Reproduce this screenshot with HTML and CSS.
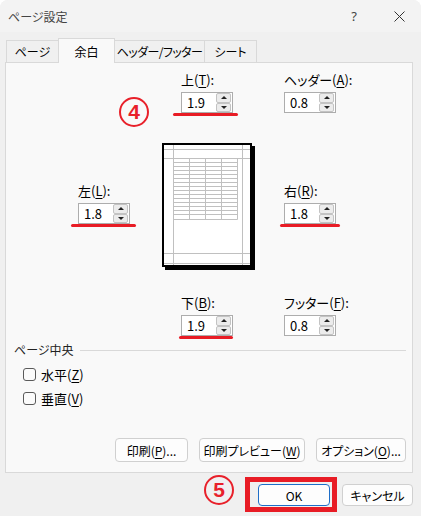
FILE: index.html
```html
<!DOCTYPE html>
<html lang="ja">
<head>
<meta charset="utf-8">
<title>ページ設定</title>
<link rel="stylesheet" href="styles.css">
</head>
<body>
<div class="window">
  <div class="titlebar">
    <span class="title">ページ設定</span>
    <span class="tb-help">?</span>
    <span class="tb-close"><svg width="11" height="11" viewBox="0 0 11 11"><path d="M0.5 0.5 L10.5 10.5 M10.5 0.5 L0.5 10.5" stroke="#333" stroke-width="1" fill="none"/></svg></span>
  </div>

  <div class="tabs">
    <div class="tab tab-page">ページ</div>
    <div class="tab tab-margin active">余白</div>
    <div class="tab tab-hf">ヘッダー/フッター</div>
    <div class="tab tab-sheet">シート</div>
  </div>

  <div class="panel">
    <div class="margins">
      <div class="field f-top">
        <label>上(<u>T</u>):</label>
        <div class="spin"><span class="val">1.9</span><span class="spin-btns"><span class="up"></span><span class="down"></span></span></div>
        <span class="redline rl-top"></span>
      </div>
      <div class="field f-header">
        <label>ヘッダー(<u>A</u>):</label>
        <div class="spin"><span class="val">0.8</span><span class="spin-btns"><span class="up"></span><span class="down"></span></span></div>
      </div>

      <div class="field f-left">
        <label>左(<u>L</u>):</label>
        <div class="spin"><span class="val">1.8</span><span class="spin-btns"><span class="up"></span><span class="down"></span></span></div>
        <span class="redline rl-left"></span>
      </div>
      <div class="preview">
        <svg width="93" height="127" viewBox="0 0 93 127">
          <rect x="3" y="3" width="90" height="124" fill="#000"/>
          <rect x="1" y="1" width="88" height="122" fill="#fff" stroke="#000" stroke-width="2"/>
          <g stroke="#c0c0c0" stroke-width="1" fill="none">
            <path d="M11.5 2 V122 M80.5 2 V122 M2 6.5 H88 M2 15.5 H88 M2 110.5 H88 M2 120.5 H88"/>
            <path d="M27.5 15.5 V76.5 M43.5 15.5 V76.5 M59.5 15.5 V76.5 M75.5 15.5 V76.5"/>
            <path d="M11.5 19.5 H75.5 M11.5 23.5 H75.5 M11.5 27.5 H75.5 M11.5 31.5 H75.5 M11.5 35.5 H75.5 M11.5 39.5 H75.5 M11.5 43.5 H75.5 M11.5 47.5 H75.5 M11.5 51.5 H75.5 M11.5 55.5 H75.5 M11.5 59.5 H75.5 M11.5 63.5 H75.5 M11.5 67.5 H75.5 M11.5 71.5 H75.5 M11.5 76.5 H75.5"/>
          </g>
        </svg>
      </div>
      <div class="field f-right">
        <label>右(<u>R</u>):</label>
        <div class="spin"><span class="val">1.8</span><span class="spin-btns"><span class="up"></span><span class="down"></span></span></div>
        <span class="redline rl-right"></span>
      </div>

      <div class="field f-bottom">
        <label>下(<u>B</u>):</label>
        <div class="spin"><span class="val">1.9</span><span class="spin-btns"><span class="up"></span><span class="down"></span></span></div>
        <span class="redline rl-bottom"></span>
      </div>
      <div class="field f-footer">
        <label>フッター(<u>F</u>):</label>
        <div class="spin"><span class="val">0.8</span><span class="spin-btns"><span class="up"></span><span class="down"></span></span></div>
      </div>
    </div>

    <div class="group">
      <div class="group-head"><span>ページ中央</span><span class="group-line"></span></div>
      <div class="check"><span class="box"></span>水平(<u>Z</u>)</div>
      <div class="check"><span class="box"></span>垂直(<u>V</u>)</div>
    </div>

    <div class="panel-buttons">
      <button class="btn b-print">印刷(<u>P</u>)...</button>
      <button class="btn b-preview">印刷プレビュー(<u>W</u>)</button>
      <button class="btn b-option">オプション(<u>O</u>)...</button>
    </div>
  </div>

  <div class="dialog-buttons">
    <button class="btn b-ok">OK</button>
    <button class="btn b-cancel">キャンセル</button>
  </div>

  <div class="badge badge-4">4</div>
  <div class="badge badge-5">5</div>
  <div class="ok-mark"></div>
</div>
</body>
</html>
```

FILE: styles.css
```css
* { box-sizing: border-box; }
html, body { margin: 0; padding: 0; }
body {
  width: 421px;
  height: 516px;
  overflow: hidden;
  background: #ffffff;
  font-family: "Noto Sans CJK JP", "Noto Sans", sans-serif;
  font-feature-settings: "palt";
  font-size: 12px;
  color: #000;
}
u { text-decoration: underline; text-underline-offset: 2px; }

.window {
  position: relative;
  width: 421px;
  height: 516px;
  background: #f0f0f0;
  border-radius: 8px 8px 0 0;
}

.titlebar {
  height: 32px;
  display: flex;
  align-items: center;
  padding: 0 12px 0 8px;
  background: #f3f3f3;
  border-radius: 8px 8px 0 0;
}
.title { flex: 1; color: #444; font-size: 12px; }
.tb-help { width: 20px; text-align: center; color: #444; font-size: 13px; margin-right: 25px; font-family: "Noto Sans", sans-serif; }
.tb-close { width: 20px; display: flex; justify-content: center; }

.tabs {
  display: flex;
  align-items: flex-end;
  height: 30px;
  padding: 6px 0 0 6px;
}
.tab {
  height: 22px;
  display: flex;
  align-items: center;
  justify-content: center;
  border: 1px solid #d9d9d9;
  border-bottom: none;
  margin-left: -1px;
  background: #f0f0f0;
  font-size: 12px;
  white-space: nowrap;
}
.tab:first-child { margin-left: 0; }
.tab.active {
  height: 25px;
  margin-bottom: -1px;
  background: #f9f9f9;
  position: relative;
  z-index: 1;
}
.tab-page { width: 53px; }
.tab-margin { width: 57px; }
.tab-hf { width: 91px; letter-spacing: -0.6px; }
.tab-sheet { width: 53px; }

.panel {
  margin: 0 8px 0 5px;
  height: 411px;
  border: 1px solid #d9d9d9;
  background: #f9f9f9;
  padding: 8px 6px 10px 8px;
  display: flex;
  flex-direction: column;
}

.margins {
  display: grid;
  grid-template-columns: 84px 122px auto;
  padding-left: 64px;
}
.f-top { grid-column: 2; grid-row: 1; margin-left: 19px; }
.f-header { grid-column: 3; grid-row: 1; }
.f-left { grid-column: 1; grid-row: 2; margin-top: 69px; }
.preview { grid-column: 2; grid-row: 2; margin-top: 30px; }
.preview svg { display: block; }
.f-right { grid-column: 3; grid-row: 2; margin-top: 69px; }
.f-bottom { grid-column: 2; grid-row: 3; margin-left: 19px; margin-top: 24px; }
.f-footer { grid-column: 3; grid-row: 3; margin-top: 24px; }

.field {
  position: relative;
  display: flex;
  flex-direction: column;
  align-items: flex-start;
  align-self: start;
}
.field label {
  font-size: 13px;
  line-height: 18px;
  margin-bottom: 3px;
}
.spin {
  width: 52px;
  height: 21px;
  border: 1px solid #adadad;
  background: #fff;
  display: flex;
  align-items: center;
  justify-content: space-between;
  padding: 0 1px 0 5px;
}
.val { font-size: 13px; line-height: 19px; }
.spin-btns {
  width: 15px;
  height: 19px;
  display: flex;
  flex-direction: column;
}
.spin-btns span {
  flex: 1;
  background: #ececec;
  border: 1px solid #c3c3c3;
  border-radius: 2px;
  display: flex;
  align-items: center;
  justify-content: center;
}
.spin-btns .up::before {
  content: "";
  border-left: 3px solid transparent;
  border-right: 3px solid transparent;
  border-bottom: 3px solid #222;
}
.spin-btns .down::before {
  content: "";
  border-left: 3px solid transparent;
  border-right: 3px solid transparent;
  border-top: 3px solid #222;
}

.redline {
  position: absolute;
  top: 100%;
  height: 3px;
  margin-top: 0;
  background: #e81c25;
  border-radius: 2px;
}
.rl-top { left: -8px; width: 65px; }
.rl-left { left: -7px; width: 65px; }
.rl-right { left: -4px; width: 60px; }
.rl-bottom { left: -2px; width: 54px; }

.group { margin-top: 5px; }
.group-head {
  display: flex;
  align-items: center;
  line-height: 18px;
  font-size: 12px;
  color: #222;
}
.group-line {
  flex: 1;
  height: 1px;
  background: #d9d9d9;
  margin-left: 6px;
  margin-right: 0;
}
.check {
  display: flex;
  align-items: center;
  height: 24px;
  padding-left: 9px;
  font-size: 13px;
}
.group-head + .check { margin-top: 3px; }
.box {
  width: 13px;
  height: 13px;
  border: 1px solid #5a5a5a;
  border-radius: 3px;
  background: #fbfbfb;
  margin-right: 5px;
}

.panel-buttons {
  margin-top: 28px;
  display: flex;
  justify-content: flex-end;
  gap: 11px;
}
.btn {
  height: 24px;
  font-family: inherit;
  font-feature-settings: "palt";
  font-size: 12px;
  color: #000;
  background: #fdfdfd;
  border: 1px solid #d0d0d0;
  border-radius: 4px;
  padding: 0;
  white-space: nowrap;
}
.b-print { width: 73px; }
.b-preview { width: 106px; }
.b-option { width: 90px; }

.dialog-buttons {
  display: flex;
  justify-content: flex-end;
  gap: 12px;
  padding: 11px 8px 0 0;
}
.b-ok { width: 72px; height: 22px; border: 1px solid #1e6ec8; }
.b-cancel { width: 71px; height: 22px; }

.badge {
  position: absolute;
  width: 30px;
  height: 30px;
  border: 2.5px solid #e8202a;
  border-radius: 50%;
  color: #e8202a;
  font-family: "Liberation Sans", Arial, sans-serif;
  font-weight: bold;
  font-size: 21px;
  line-height: 25px;
  text-align: center;
}
.badge-4 { left: 119px; top: 97px; }
.badge-5 { left: 204px; top: 475px; }
.ok-mark {
  position: absolute;
  left: 245px;
  top: 477px;
  width: 92px;
  height: 35px;
  border: 5px solid #e81c25;
}
```
